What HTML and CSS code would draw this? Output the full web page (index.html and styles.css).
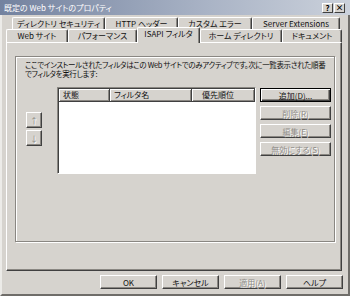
FILE: index.html
```html
<!DOCTYPE html>
<html lang="ja">
<head>
    <meta charset="UTF-8">
    <meta name="viewport" content="width=device-width, initial-scale=1.0">
    <title>既定の Web サイトのプロパティ</title>
    <link rel="stylesheet" href="styles.css">
</head>
<body>
    <div class="dialog">
        <div class="titlebar">
            <span class="title">既定の Web サイトのプロパティ</span>
            <span class="caption-buttons">
                <span class="cap-btn">?</span>
                <span class="cap-btn">×</span>
            </span>
        </div>

        <div class="tabs">
            <div class="tab-row back">
                <div class="tab w93">ディレクトリ セキュリティ</div>
                <div class="tab w73">HTTP ヘッダー</div>
                <div class="tab w74">カスタム エラー</div>
                <div class="tab w88">Server Extensions</div>
            </div>
            <div class="tab-row front">
                <div class="tab w62">Web サイト</div>
                <div class="tab w69">パフォーマンス</div>
                <div class="tab w63 selected">ISAPI フィルタ</div>
                <div class="tab w82">ホーム ディレクトリ</div>
                <div class="tab w60">ドキュメント</div>
            </div>
        </div>

        <div class="panel">
            <div class="group">
                <p class="desc">ここでインストールされたフィルタはこの Web サイトでのみアクティブです。次に一覧表示された順番</p>
                <p class="desc">でフィルタを実行します:</p>
                <div class="filter-area">
                    <div class="order-buttons">
                        <button class="btn small disabled">↑</button>
                        <button class="btn small disabled">↓</button>
                    </div>
                    <div class="list">
                        <div class="list-head">
                            <span>状態</span>
                            <span>フィルタ名</span>
                            <span>優先順位</span>
                        </div>
                        <div class="list-body"></div>
                    </div>
                    <div class="side-buttons">
                        <button class="btn default">追加(D)...</button>
                        <button class="btn disabled">削除(R)</button>
                        <button class="btn disabled">編集(E)</button>
                        <button class="btn disabled">無効にする(S)</button>
                    </div>
                </div>
            </div>
        </div>

        <div class="footer">
            <button class="btn wide">OK</button>
            <button class="btn wide">キャンセル</button>
            <button class="btn wide disabled">適用(A)</button>
            <button class="btn wide">ヘルプ</button>
        </div>
    </div>
</body>
</html>
```

FILE: styles.css
```css
body {
    margin: 0;
    padding: 0;
    background: #d6d3ce;
    font-family: "Noto Sans CJK JP", "DejaVu Sans", sans-serif;
    font-size: 8px;
    font-feature-settings: "palt";
    color: #111;
}

.dialog {
    width: 350px;
    height: 296px;
    box-sizing: border-box;
    background: #d6d3ce;
    border-left: 2px solid #ecebe8;
    border-right: 2px solid #6f6d69;
    border-bottom: 2px solid #6f6d69;
    display: flex;
    flex-direction: column;
}

/* title bar */
.titlebar {
    height: 15px;
    margin: 0 -2px;
    padding: 0 4px;
    display: flex;
    align-items: center;
    justify-content: space-between;
    background: linear-gradient(to right, #73829f, #aab4c6 60%, #cbd1db);
}

.title {
    color: #fff;
    line-height: 15px;
}

.caption-buttons {
    display: flex;
    gap: 1px;
    margin-right: 1px;
}

.cap-btn {
    width: 11px;
    height: 10px;
    box-sizing: border-box;
    background: #d6d3ce;
    border: 1px solid;
    border-color: #fff #404040 #404040 #fff;
    font-size: 8px;
    font-weight: bold;
    line-height: 8px;
    text-align: center;
    color: #000;
}

/* tabs */
.tabs {
    height: 27px;
    margin: 0 6px 0 4px;
}

.tab-row {
    display: flex;
}

.tab-row.back {
    margin-top: 2px;
    padding-left: 6px;
    height: 12px;
}

.tab-row.front {
    height: 13px;
}

.tab {
    box-sizing: border-box;
    border-top: 1px solid #fff;
    border-left: 1px solid #fff;
    border-right: 1px solid #404040;
    box-shadow: inset -1px 0 0 #8a8782;
    border-radius: 2px 2px 0 0;
    text-align: center;
    white-space: nowrap;
    line-height: 11px;
}

.tab-row.front .tab {
    line-height: 12px;
}

.tab.selected {
    position: relative;
    z-index: 1;
    height: 16px;
    margin-top: -2px;
    background: #d6d3ce;
    line-height: 13px;
}

.w93 { width: 93px; }
.w73 { width: 73px; }
.w74 { width: 74px; }
.w88 { width: 88px; }
.w62 { width: 62px; }
.w69 { width: 69px; }
.w63 { width: 63px; }
.w82 { width: 82px; }
.w60 { width: 60px; }

/* property page */
.panel {
    height: 229px;
    box-sizing: border-box;
    margin: 0 6px 0 4px;
    padding: 13px 0 0 8px;
    border: 1px solid;
    border-color: #fff #404040 #404040 #fff;
    box-shadow: inset -1px -1px 0 #8a8782;
}

.group {
    width: 320px;
    height: 186px;
    box-sizing: border-box;
    padding: 3px 0 0 9px;
    border: 1px solid #8a8782;
    box-shadow: 1px 1px 0 #fff, inset 1px 1px 0 #fff;
}

.desc {
    margin: 0;
    height: 9px;
    font-size: 7.5px;
    letter-spacing: -0.35px;
    line-height: 9px;
    white-space: nowrap;
}

.filter-area {
    display: flex;
    align-items: flex-start;
    margin-top: 9px;
}

.order-buttons {
    display: flex;
    flex-direction: column;
    gap: 2px;
    margin: 25px 15px 0 1px;
}

.list {
    width: 199px;
    height: 87px;
    box-sizing: border-box;
    background: #fff;
    border: 1px solid;
    border-color: #8a8782 #fff #fff #8a8782;
    box-shadow: inset 1px 1px 0 #404040;
    padding: 1px 0 0 1px;
}

.list-head {
    display: grid;
    grid-template-columns: 51px 82px 1fr;
    height: 13px;
    background: #d6d3ce;
}

.list-head span {
    box-sizing: border-box;
    padding-left: 4px;
    line-height: 12px;
    border-right: 1px solid #404040;
    border-bottom: 1px solid #404040;
    box-shadow: inset 1px 1px 0 #fff, inset -1px -1px 0 #8a8782;
}

.list-head span:last-child {
    padding-left: 10px;
}

.side-buttons {
    display: flex;
    flex-direction: column;
    gap: 4px;
    margin: 1px 0 0 4px;
}

/* buttons */
.btn {
    width: 71px;
    height: 14px;
    box-sizing: border-box;
    padding: 0;
    background: #d6d3ce;
    border: 1px solid;
    border-color: #fff #404040 #404040 #fff;
    box-shadow: inset -1px -1px 0 #8a8782;
    font-family: inherit;
    font-size: 8px;
    font-feature-settings: "palt";
    line-height: 11px;
    color: #111;
    text-align: center;
}

.btn.default {
    border-color: #000;
    box-shadow: inset 1px 1px 0 #fff, inset -1px -1px 0 #404040, inset -2px -2px 0 #8a8782;
}

.btn.disabled {
    color: #8e8b86;
    text-shadow: 1px 1px 0 #fff;
}

.btn.small {
    width: 16px;
    height: 16px;
    font-size: 8px;
    line-height: 13px;
}

.btn.wide {
    width: 57px;
}

.footer {
    display: flex;
    justify-content: flex-end;
    gap: 5px;
    margin: 4px 5px 0 0;
}
```
